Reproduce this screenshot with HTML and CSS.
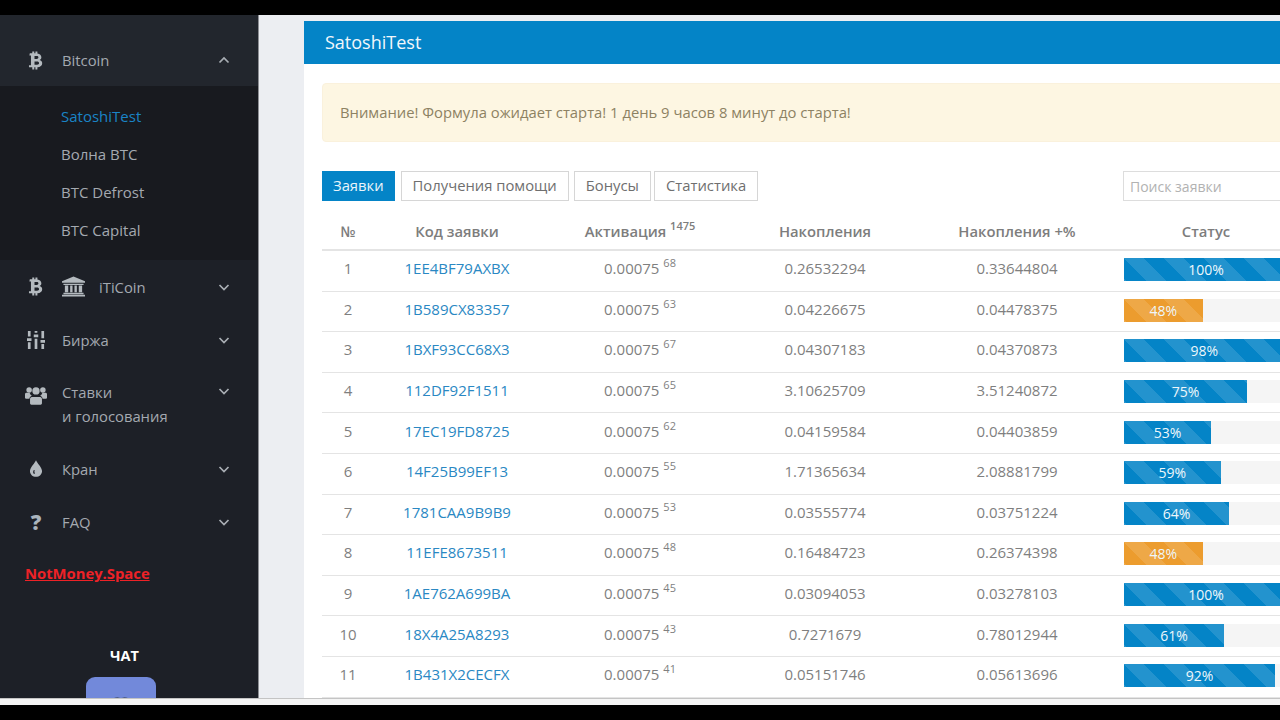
FILE: index.html
```html
<!DOCTYPE html>
<html lang="ru">
<head>
<meta charset="utf-8">
<title>SatoshiTest</title>
<link rel="stylesheet" href="styles.css">
</head>
<body>
<div class="letterbox top"></div>
<div class="page">
  <aside class="sidebar">
    <div class="nav-item open">
      <span class="ico"><svg viewBox="3 1 19 23" class="i-btc"><path fill-rule="evenodd" d="M5 3.800h3V1.500h2.400v2.300h1.400V1.500h2.400v2.500c3 .6 4.800 2.100 4.800 4.600 0 1.600-.8 2.700-2.200 3.300 2 .5 3.200 1.900 3.200 4 0 3-2.300 4.600-5.800 4.900v2.700h-2.400v-2.700h-1.400v2.700H8v-2.700H4v-2.600h2.400V6.400H4.500zM10.700 7.200v3.400h2.700c1.200 0 2-.7 2-1.700 0-1.100-.8-1.700-2-1.700zM10.700 13.600v4h3.100c1.500 0 2.400-.8 2.400-2s-.9-2-2.400-2z"/></svg></span>
      <span class="label">Bitcoin</span>
      <svg class="chev" viewBox="0 0 12 8"><path d="M1.500 6.500 6 2l4.500 4.500"/></svg>
    </div>
    <ul class="submenu">
      <li class="active">SatoshiTest</li>
      <li>Волна BTC</li>
      <li>BTC Defrost</li>
      <li>BTC Capital</li>
    </ul>
    <div class="nav-item">
      <span class="ico"><svg viewBox="3 1 19 23" class="i-btc"><path fill-rule="evenodd" d="M5 3.800h3V1.500h2.400v2.300h1.400V1.500h2.400v2.500c3 .6 4.800 2.100 4.800 4.600 0 1.600-.8 2.700-2.200 3.300 2 .5 3.200 1.900 3.200 4 0 3-2.300 4.600-5.800 4.900v2.700h-2.400v-2.700h-1.400v2.700H8v-2.700H4v-2.600h2.400V6.400H4.500zM10.700 7.200v3.400h2.700c1.200 0 2-.7 2-1.700 0-1.100-.8-1.700-2-1.700zM10.700 13.600v4h3.100c1.500 0 2.400-.8 2.400-2s-.9-2-2.400-2z"/></svg></span>
      <svg class="i-bank" viewBox="0 0 24 21"><path d="M12 0 24 5v1.500H0V5zM1.500 7.500h21V9h-21zM3 9.500h3.500v7H3zM8.500 9.500h2.500v7H8.500zM13 9.500h2.500v7H13zM17.500 9.500H21v7h-3.500zM1.500 17h21v1.500h-21zM0 19h24v2H0z"/></svg>
      <span class="label bank">iTiCoin</span>
      <svg class="chev" viewBox="0 0 12 8"><path d="M1.500 2 6 6.500 10.500 2"/></svg>
    </div>
    <div class="nav-item">
      <span class="ico"><svg viewBox="0 0 20 20" class="i-sliders"><path d="M1 0h3v6H1zM0 8h5v3H0zM1 12.500h3V20H1zM8.500 0h3v2h-3zM7.500 4h5v3h-5zM8.500 8.500h3V20h-3zM16 0h3v8h-3zM15 10h5v3h-5zM16 14.500h3V20h-3z"/></svg></span>
      <span class="label">Биржа</span>
      <svg class="chev" viewBox="0 0 12 8"><path d="M1.500 2 6 6.500 10.500 2"/></svg>
    </div>
    <div class="nav-item tall">
      <span class="ico"><svg viewBox="0 0 24 20" class="i-users"><circle cx="4.500" cy="4" r="3"/><circle cx="19.500" cy="4" r="3"/><circle cx="12" cy="5" r="4"/><path d="M0 8.500c0-1 1-1.500 2-1.500h3c.6 1.800 1.500 2.800 2.500 3.300C5.800 11 5 12 4.800 13.500H1c-.6 0-1-.5-1-1zM24 8.500c0-1-1-1.500-2-1.500h-3c-.6 1.800-1.500 2.800-2.500 3.300 1.700.7 2.500 1.700 2.700 3.200H23c.6 0 1-.5 1-1zM7.500 11.500h9c1.300 0 2 1 2 2.500v4.500c0 1-.6 1.500-1.500 1.500H7c-.9 0-1.500-.5-1.500-1.500V14c0-1.500.7-2.500 2-2.500z"/></svg></span>
      <span class="label">Ставки<br>и голосования</span>
      <svg class="chev" viewBox="0 0 12 8"><path d="M1.500 2 6 6.500 10.500 2"/></svg>
    </div>
    <div class="nav-item">
      <span class="ico"><svg viewBox="0 0 14 18" class="i-drop"><path fill-rule="evenodd" d="M7 0c1 3 6.500 7.500 6.500 11.700C13.500 15.300 10.600 18 7 18s-6.500-2.700-6.500-6.300C.5 7.500 6 3 7 0zM4.700 10.500c-1 1.500-1.200 3.300.3 4.500l.9-.8c-.8-.9-.8-2-.2-3.200z"/></svg></span>
      <span class="label">Кран</span>
      <svg class="chev" viewBox="0 0 12 8"><path d="M1.500 2 6 6.500 10.500 2"/></svg>
    </div>
    <div class="nav-item">
      <span class="ico"><span class="q">?</span></span>
      <span class="label">FAQ</span>
      <svg class="chev" viewBox="0 0 12 8"><path d="M1.500 2 6 6.500 10.500 2"/></svg>
    </div>
    <a class="promo">NotMoney.Space</a>
    <div class="chat">
      <div class="chat-title">ЧАТ</div>
      <div class="discord"><svg viewBox="0 0 24 10"><path d="M3 9C6 3 9 2 10 2c1 .5 3 .5 4 0 1 0 4 1 7 7" /></svg></div>
    </div>
  </aside>
  <main class="content">
    <section class="panel">
      <h1 class="panel-head">SatoshiTest</h1>
      <div class="panel-body">
        <div class="alert">Внимание! Формула ожидает старта! 1 день 9 часов 8 минут до старта!</div>
        <div class="toolbar">
          <button class="tab current">Заявки</button>
          <button class="tab">Получения помощи</button>
          <button class="tab">Бонусы</button>
          <button class="tab">Статистика</button>
          <div class="search">Поиск заявки</div>
        </div>
        <div class="table">
          <div class="row head"><span>№</span><span>Код заявки</span><span>Активация <sup>1475</sup></span><span>Накопления</span><span>Накопления +%</span><span>Статус</span></div>
          <div class="row"><span>1</span><a>1EE4BF79AXBX</a><span>0.00075 <sup>68</sup></span><span>0.26532294</span><span>0.33644804</span><div class="cell-bar"><div class="bar"><div class="fill" style="width:100%">100%</div></div></div></div>
          <div class="row"><span>2</span><a>1B589CX83357</a><span>0.00075 <sup>63</sup></span><span>0.04226675</span><span>0.04478375</span><div class="cell-bar"><div class="bar"><div class="fill warn" style="width:48%">48%</div></div></div></div>
          <div class="row"><span>3</span><a>1BXF93CC68X3</a><span>0.00075 <sup>67</sup></span><span>0.04307183</span><span>0.04370873</span><div class="cell-bar"><div class="bar"><div class="fill" style="width:98%">98%</div></div></div></div>
          <div class="row"><span>4</span><a>112DF92F1511</a><span>0.00075 <sup>65</sup></span><span>3.10625709</span><span>3.51240872</span><div class="cell-bar"><div class="bar"><div class="fill" style="width:75%">75%</div></div></div></div>
          <div class="row"><span>5</span><a>17EC19FD8725</a><span>0.00075 <sup>62</sup></span><span>0.04159584</span><span>0.04403859</span><div class="cell-bar"><div class="bar"><div class="fill" style="width:53%">53%</div></div></div></div>
          <div class="row"><span>6</span><a>14F25B99EF13</a><span>0.00075 <sup>55</sup></span><span>1.71365634</span><span>2.08881799</span><div class="cell-bar"><div class="bar"><div class="fill" style="width:59%">59%</div></div></div></div>
          <div class="row"><span>7</span><a>1781CAA9B9B9</a><span>0.00075 <sup>53</sup></span><span>0.03555774</span><span>0.03751224</span><div class="cell-bar"><div class="bar"><div class="fill" style="width:64%">64%</div></div></div></div>
          <div class="row"><span>8</span><a>11EFE8673511</a><span>0.00075 <sup>48</sup></span><span>0.16484723</span><span>0.26374398</span><div class="cell-bar"><div class="bar"><div class="fill warn" style="width:48%">48%</div></div></div></div>
          <div class="row"><span>9</span><a>1AE762A699BA</a><span>0.00075 <sup>45</sup></span><span>0.03094053</span><span>0.03278103</span><div class="cell-bar"><div class="bar"><div class="fill" style="width:100%">100%</div></div></div></div>
          <div class="row"><span>10</span><a>18X4A25A8293</a><span>0.00075 <sup>43</sup></span><span>0.7271679</span><span>0.78012944</span><div class="cell-bar"><div class="bar"><div class="fill" style="width:61%">61%</div></div></div></div>
          <div class="row"><span>11</span><a>1B431X2CECFX</a><span>0.00075 <sup>41</sup></span><span>0.05151746</span><span>0.05613696</span><div class="cell-bar"><div class="bar"><div class="fill" style="width:92%">92%</div></div></div></div>
        </div>
      </div>
    </section>
  </main>
</div>
<div class="strip"></div>
<div class="letterbox bottom"></div>
</body>
</html>
```
FILE: styles.css
```css
* { box-sizing: border-box; }
html, body { margin: 0; height: 720px; overflow: hidden; background: #000; }
body { display: flex; flex-direction: column; font: 15px/24px "Open Sans", "Liberation Sans", sans-serif; color: #7f7f7f; }
.letterbox.top { flex: 0 0 15px; background: #000; }
.letterbox.bottom { flex: 1 1 auto; background: #000; }
.page { flex: 0 0 683px; display: flex; overflow: hidden; background: #eceef2; }
.strip { flex: 0 0 7px; background: #f4f4f4; border-top: 1px solid #c4c4c4; }

.sidebar { flex: 0 0 259px; padding-top: 19px; background: #1d2027; border-right: 1px solid #8d8f94; color: #a4a9b0; overflow: hidden; display: flex; flex-direction: column; }
.nav-item { flex: 0 0 53px; display: flex; align-items: center; padding: 0 28px 0 0; position: relative; }
.nav-item.open { flex-basis: 52px; background: #22262d; box-shadow: 0 -19px 0 #22262d; }
.nav-item.tall { flex-basis: 76px; align-items: flex-start; padding-top: 14px; }
.nav-item.tall .ico { margin-top: 3px; }
.nav-item.tall .chev { margin-top: 7px; }
.ico { flex: 0 0 62px; height: 24px; display: flex; align-items: center; padding-left: 36px; }
.ico svg { fill: #b4babf; flex: none; transform: translateX(-50%); }
.i-btc { width: 16px; height: 19px; }
.i-sliders { width: 18px; height: 18px; }
.i-users { width: 22px; height: 21px; }
.i-drop { width: 13px; height: 17px; }
.q { flex: none; transform: translateX(-50%); font-size: 21px; font-weight: 800; color: #aab4bd; }
.i-bank { flex: none; width: 23px; height: 21px; margin: 0 14px 0 0; fill: #b4babf; }
.label { flex: 1; white-space: nowrap; font-size: 14.800px; }
.chev { flex: none; width: 12px; height: 8px; fill: none; stroke: #a9aeb4; stroke-width: 1.700; }
.submenu { list-style: none; margin: 0; padding: 11px 0; background: #181a1f; flex: 0 0 174px; }
.submenu li { height: 38px; line-height: 38px; padding-left: 61px; }
.submenu li.active { color: #1a84c6; }
.promo { margin: 13px 0 0 25px; font-weight: 700; font-size: 14.800px; color: #ee2227; text-decoration: underline; }
.chat { margin-top: 61px; width: 242px; display: flex; flex-direction: column; align-items: center; }
.chat-title { font-size: 14.500px; line-height: 20px; font-weight: 700; color: #fff; margin: 0 0 11px 7px; }
.discord { width: 70px; height: 70px; flex: none; border-radius: 9px; background: #7289da; padding: 18px 15px 0; }
.discord svg { display: block; fill: none; stroke: #50618f; stroke-width: 1.500; }

.content { flex: 0 0 1100px; padding: 6px 0 0 45px; }
.panel { width: 1040px; min-height: 700px; background: #fff; }
.panel-head { margin: 0; height: 43px; padding-left: 21px; background: #0484c7; color: #f1f7fb; font-size: 18px; font-weight: 400; line-height: 43px; }
.panel-body { padding: 19px 0 0 18px; }
.alert { height: 59px; font-size: 14.800px; line-height: 56px; padding-left: 17px; background: #fdf6e2; border: 1px solid #faf1dc; border-radius: 4px; color: #8d8263; }
.toolbar { display: flex; align-items: flex-start; margin-top: 29px; height: 40px; }
.tab { height: 30px; padding: 0 11px 2px; margin-right: 5px; background: #fff; border: 1px solid #d6d6d6; font: 14.800px/26px "Open Sans", "Liberation Sans", sans-serif; color: #6f6f6f; }
.tab:nth-child(3) { margin-right: 3px; }
.tab.current { padding: 0 10px 2px; margin-right: 6px; background: #0484c7; border-color: #0484c7; color: #eaf4fa; }
.search { position: absolute; left: 1123px; top: 171px; width: 200px; height: 30px; padding-left: 6px; border: 1px solid #ddd; color: #b2b2b2; font-size: 14px; line-height: 30px; }
.table { width: 1000px; }
.row { display: grid; grid-template-columns: 52px 166px 200px 170px 214px 164px; height: 40.6px; padding-bottom: 5px; align-items: center; text-align: center; border-bottom: 1px solid #e4e4e4; }
.row.head { height: 40px; padding: 1px 0 0; border-bottom-width: 2px; font-weight: 600; font-size: 14.800px; color: #7d7d7d; }
.row a { color: #2a88c3; }
sup { font-size: 11px; line-height: 0; vertical-align: 7px; }
.cell-bar { padding-top: 3px; }
.bar { height: 23px; background: #f5f5f5; }
.fill { height: 23px; line-height: 23px; font-size: 14px; color: #eef7fb; background-color: #0484c7; background-image: linear-gradient(45deg, rgba(255,255,255,.12) 25%, transparent 25%, transparent 50%, rgba(255,255,255,.12) 50%, rgba(255,255,255,.12) 75%, transparent 75%, transparent); background-size: 40px 40px; }
.fill.warn { background-color: #ec9c2e; }
```
